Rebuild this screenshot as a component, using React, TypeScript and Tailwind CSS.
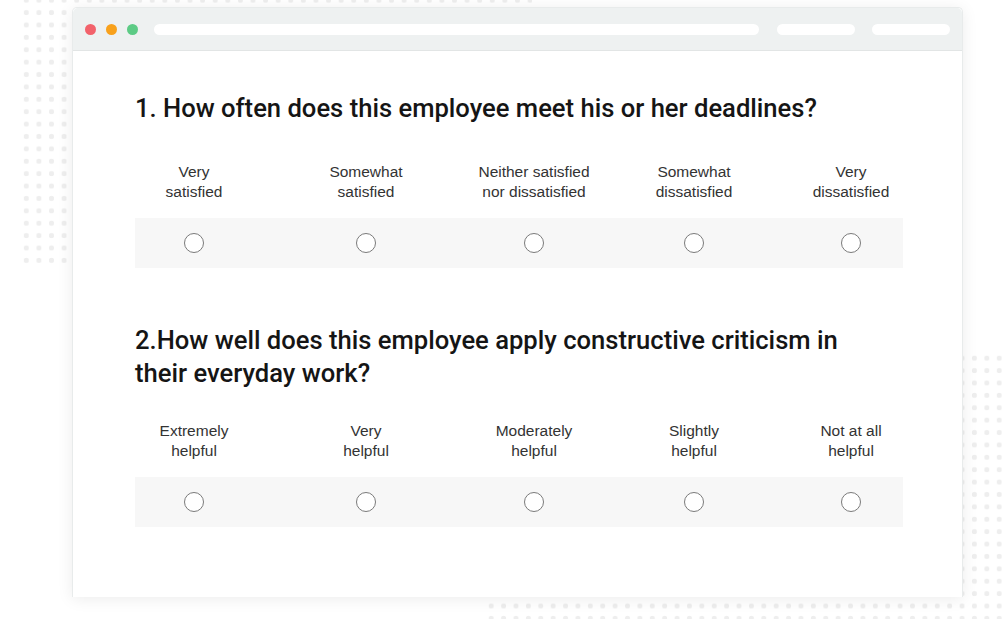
import React from "react";

const q1 = [
  ["Very", "satisfied"],
  ["Somewhat", "satisfied"],
  ["Neither satisfied", "nor dissatisfied"],
  ["Somewhat", "dissatisfied"],
  ["Very", "dissatisfied"],
];
const q2 = [
  ["Extremely", "helpful"],
  ["Very", "helpful"],
  ["Moderately", "helpful"],
  ["Slightly", "helpful"],
  ["Not at all", "helpful"],
];

function Scale({ labels }: { labels: string[][] }) {
  return (
    <div className="w-[768px]">
      <div className="grid grid-cols-[118px_226px_110px_210px_104px] text-[15.5px] leading-[20px] text-[#333333] font-['Liberation_Sans',Arial,sans-serif]">
        {labels.map((l, i) => (
          <div key={i} className="flex flex-col items-center text-center whitespace-nowrap">
            <span>{l[0]}</span>
            <span>{l[1]}</span>
          </div>
        ))}
      </div>
      <div className="mt-[16px] h-[50px] bg-[#f7f7f7] grid grid-cols-[118px_226px_110px_210px_104px] items-center">
        {labels.map((_, i) => (
          <div key={i} className="flex justify-center">
            <span className="block w-[20px] h-[20px] rounded-full border-[1.5px] border-[#7a7a7a] bg-white" />
          </div>
        ))}
      </div>
    </div>
  );
}

export default function App() {
  return (
    <div className="relative w-[1002px] h-[619px] bg-white overflow-hidden">
      <div className="absolute left-[20px] top-[-6px] w-[512px] h-[272px] bg-[radial-gradient(circle,#eeeeee_2.4px,transparent_2.9px)] bg-[length:12.6px_12.4px]" />
      <div className="absolute left-[485px] top-[352px] w-[530px] h-[280px] bg-[radial-gradient(circle,#eeeeee_2.4px,transparent_2.9px)] bg-[length:12.4px_12.4px]" />
      <div className="relative pl-[72px] pt-[7px]">
        <div className="w-[891px] h-[590px] bg-white rounded-t-[5px] shadow-[0_2px_16px_rgba(0,0,0,0.08)] border border-[#e8ebeb] border-b-0 flex flex-col">
          <div className="h-[43px] bg-[#eef1f1] border-b border-[#e2e5e5] rounded-t-[5px] flex items-center pl-[12px] pr-[12px]">
            <span className="w-[11px] h-[11px] rounded-full bg-[#f2626b]" />
            <span className="w-[11px] h-[11px] rounded-full bg-[#f8a11c] ml-[10px]" />
            <span className="w-[11px] h-[11px] rounded-full bg-[#5ccb85] ml-[10px]" />
            <span className="h-[11px] w-[606px] rounded-full bg-white ml-[16px]" />
            <span className="h-[11px] w-[78px] rounded-full bg-white ml-[18px]" />
            <span className="h-[11px] w-[78px] rounded-full bg-white ml-[17px]" />
          </div>
          <div className="pl-[62px] pt-[41px] font-['Roboto',sans-serif]">
            <h2 className="text-[25.6px] leading-[33px] font-medium text-[#151515] w-[740px]">
              1. How often does this employee meet his or her deadlines?
            </h2>
            <div className="mt-[37px]">
              <Scale labels={q1} />
            </div>
            <h2 className="mt-[56px] text-[25.6px] leading-[33px] font-medium text-[#151515] w-[740px]">
              2.How well does this employee apply constructive criticism in their everyday work?
            </h2>
            <div className="mt-[31px]">
              <Scale labels={q2} />
            </div>
          </div>
        </div>
      </div>
    </div>
  );
}
